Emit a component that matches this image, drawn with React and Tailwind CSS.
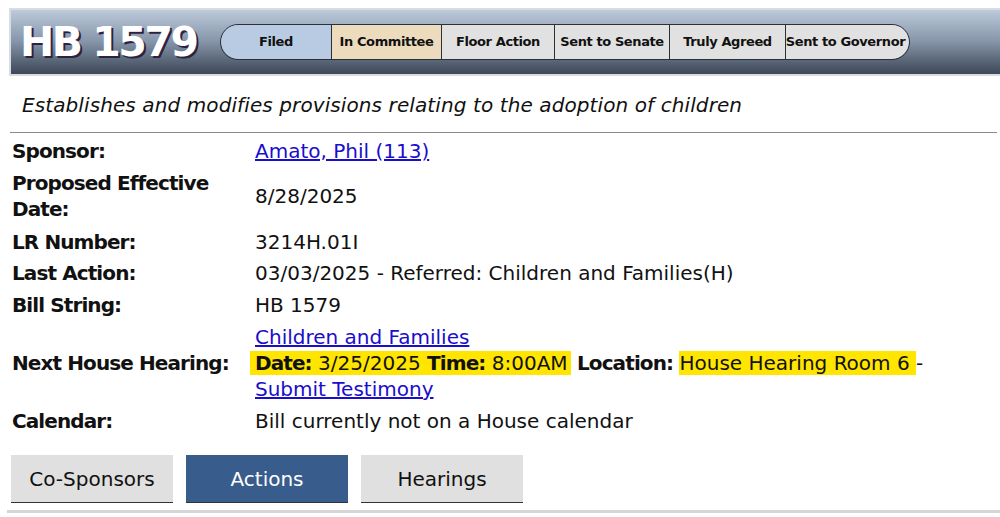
import React from "react";

const stages = [
  { name: "Filed", cls: "bg-[#b9cbe2] rounded-l-full w-[110px]" },
  { name: "In Committee", cls: "bg-[#ecdbbd] w-[110px]" },
  { name: "Floor Action", cls: "bg-[#e1e1e1] w-[113px]" },
  { name: "Sent to Senate", cls: "bg-[#e1e1e1] w-[115px]" },
  { name: "Truly Agreed", cls: "bg-[#e1e1e1] w-[116px]" },
  { name: "Sent to Governor", cls: "bg-[#e1e1e1] rounded-r-full w-[124px] pr-[4px]" },
];

function Row({ label, children, className = "" }) {
  return (
    <div className={"flex items-center " + className}>
      <div className="w-[243px] font-bold leading-[26px] tracking-[-0.9px]">{label}</div>
      <div className="flex-1 leading-[26px]">{children}</div>
    </div>
  );
}

export default function App() {
  return (
    <div
      className="w-[1000px] h-[517px] bg-white overflow-hidden text-[#111] pt-[8px]"
      style={{ fontFamily: "'DejaVu Sans', Tahoma, sans-serif" }}
    >
      {/* header band */}
      <div className="ml-[9px] border-2 border-[#d8dde3] border-r-0">
        <div className="h-[64px] flex items-center bg-gradient-to-b from-[#bccadb] via-[#8594a8] to-[#3d4858] pl-[9px]">
          <div
            className="text-white font-bold text-[41px] tracking-[-2.5px] w-[200px] leading-none whitespace-nowrap"
            style={{ textShadow: "2px 2px 0 #2c2240" }}
          >
            HB 1579
          </div>
          <div className="flex h-[36px] border border-[#2a2f38] rounded-full overflow-hidden text-[13px] font-bold tracking-[-0.4px] whitespace-nowrap">
            {stages.map((s, i) => (
              <div
                key={s.name}
                className={
                  "flex items-center justify-center " +
                  s.cls +
                  (i > 0 ? " border-l border-[#2a2f38]" : "")
                }
              >
                {s.name}
              </div>
            ))}
          </div>
        </div>
      </div>

      {/* description */}
      <div className="pl-[22px] pt-[16px] pb-[14px] italic text-[20px] leading-[26px] tracking-[0.1px]">
        Establishes and modifies provisions relating to the adoption of children
      </div>
      <div className="ml-[10px] mr-[3px] h-px bg-[#8a8a8a]" />

      <div className="pl-[12px] text-[20px] pt-[3px]">
        <Row label="Sponsor:" className="h-[30px]">
          <a href="#" className="text-[#1a0dcc] underline">Amato, Phil (113)</a>
        </Row>
        <Row label={<span>Proposed Effective<br />Date:</span>} className="h-[60px]">
          8/28/2025
        </Row>
        <Row label="LR Number:" className="h-[31px]">3214H.01I</Row>
        <Row label="Last Action:" className="h-[31px]">
          03/03/2025 - Referred: Children and Families(H)
        </Row>
        <Row label="Bill String:" className="h-[33px]">HB 1579</Row>
        <Row label="Next House Hearing:" className="h-[84px]">
          <div>
            <a href="#" className="text-[#1a0dcc] underline">Children and Families</a>
          </div>
          <div>
            <span className="bg-[#ffe500] -ml-[5px] pl-[5px] pr-[3px]">
              <b className="tracking-[-0.9px]">Date:</b> 3/25/2025 <b className="tracking-[-0.9px]">Time:</b> 8:00AM
            </span>{" "}
            <b className="tracking-[-0.9px]">Location:</b>{" "}
            <span className="bg-[#ffe500]">House Hearing Room 6 </span>-
          </div>
          <div>
            <a href="#" className="text-[#1a0dcc] underline">Submit Testimony</a>
          </div>
        </Row>
        <Row label="Calendar:" className="h-[32px]">
          Bill currently not on a House calendar
        </Row>
      </div>

      {/* tabs */}
      <div className="flex gap-[13px] pl-[11px] pt-[18px]">
        <div className="w-[162px] h-[48px] flex items-center justify-center bg-[#e0e0e0] border-b border-[#333] text-[20px]">
          Co-Sponsors
        </div>
        <div className="w-[162px] h-[48px] flex items-center justify-center bg-[#385c8c] border-b border-[#333] text-white text-[20px]">
          Actions
        </div>
        <div className="w-[162px] h-[48px] flex items-center justify-center bg-[#e0e0e0] border-b border-[#333] text-[20px]">
          Hearings
        </div>
      </div>
      <div className="ml-[7px] mt-[7px] h-[3px] bg-[#d6d6d6]" />
    </div>
  );
}
